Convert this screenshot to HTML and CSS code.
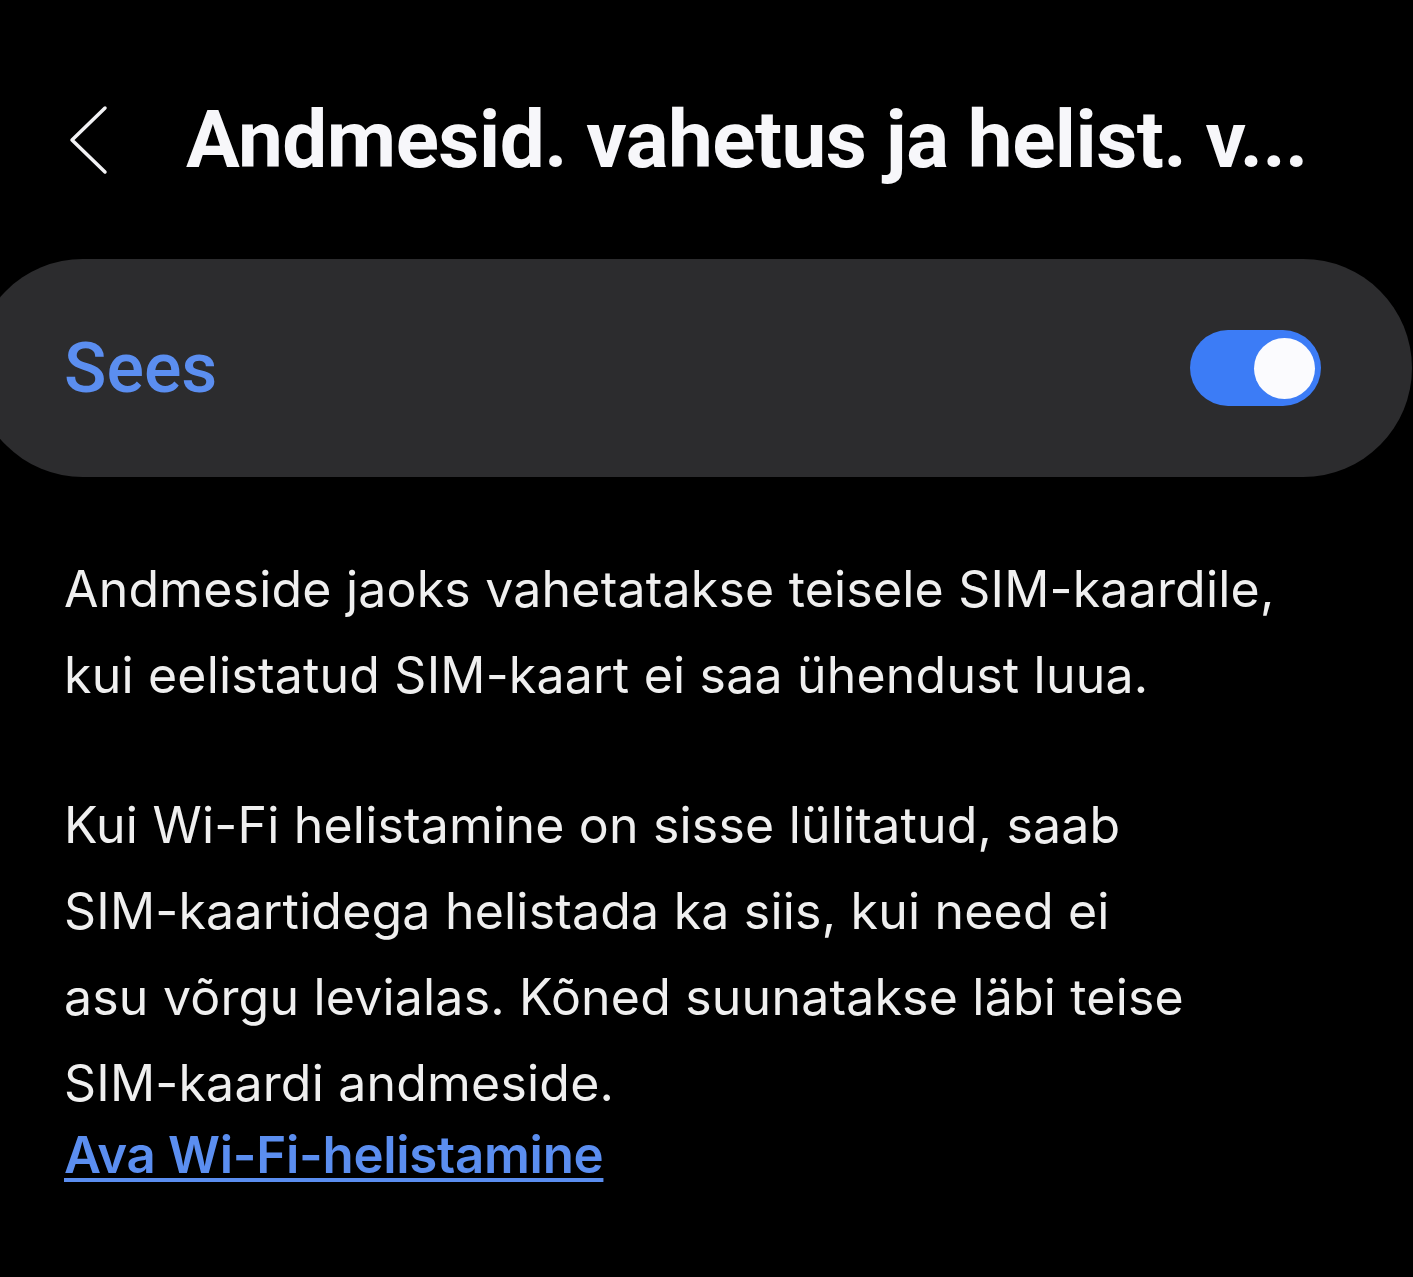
FILE: index.html
```html
<!DOCTYPE html>
<html>
<head>
  <meta charset="UTF-8">
  <title>Andmesid. vahetus ja helist. vahetus</title>
  <link rel="stylesheet" href="styles.css">
</head>
<body>
  <div class="screen">
    <div class="header">
      <button class="back" aria-label="Tagasi">
        <svg width="40" height="70" viewBox="0 0 40 70">
          <path d="M37 3 L4 35 L37 67" fill="none" stroke="#f2f2f4" stroke-width="3.5" stroke-linecap="round" stroke-linejoin="round"/>
        </svg>
      </button>
      <h1 class="title">Andmesid. vahetus ja helist. v...</h1>
    </div>

    <div class="card">
      <span class="card-label">Sees</span>
      <div class="switch on">
        <div class="knob"></div>
      </div>
    </div>

    <div class="info">
      <p>Andmeside jaoks vahetatakse teisele SIM-kaardile,<br>kui eelistatud SIM-kaart ei saa ühendust luua.</p>
      <p>Kui Wi-Fi helistamine on sisse lülitatud, saab<br>SIM-kaartidega helistada ka siis, kui need ei<br>asu võrgu levialas. Kõned suunatakse läbi teise<br>SIM-kaardi andmeside.</p>
      <a class="link" href="#">Ava Wi-Fi-helistamine</a>
    </div>
  </div>
</body>
</html>
```

FILE: styles.css
```css
body {
  margin: 0;
  background-color: #000000;
  font-family: Roboto, "Noto Sans", sans-serif;
  color: #f2f2f4;
  overflow: hidden;
}
.screen {
  width: 1413px;
  min-height: 1277px;
}
.header {
  display: flex;
  align-items: center;
  height: 140px;
  padding-top: 70px;
  padding-left: 68px;
}
.back {
  background: none;
  border: none;
  padding: 0;
  margin: 0;
  width: 42px;
  height: 70px;
  display: flex;
  align-items: center;
  cursor: pointer;
}
.title {
  margin: 0 0 0 76px;
  font-size: 80px;
  font-weight: 700;
  color: #f7f7fa;
  white-space: nowrap;
  letter-spacing: -0.5px;
}
.card {
  display: flex;
  align-items: center;
  justify-content: space-between;
  height: 218px;
  margin: 49px 1px 0 -26px;
  padding: 0 91px 0 90px;
  background-color: #2c2c2e;
  border-radius: 109px;
}
.card-label {
  font-size: 70px;
  font-weight: 500;
  color: #5b8ef0;
}
.switch {
  position: relative;
  width: 131px;
  height: 76px;
  border-radius: 38px;
  background-color: #3c7cf6;
}
.knob {
  position: absolute;
  top: 8px;
  right: 6px;
  width: 61px;
  height: 61px;
  border-radius: 50%;
  background-color: #fbfbfe;
}
.info {
  padding: 69px 0 0 64px;
  font-family: Inter, Roboto, sans-serif;
}
.info p {
  margin: 0 0 64px 0;
  font-size: 50px;
  line-height: 86px;
  letter-spacing: 0.2px;
  color: #efefef;
}
.info p:last-of-type {
  margin-bottom: 0;
}
.link {
  display: inline-block;
  font-size: 51px;
  font-weight: 600;
  line-height: 57px;
  letter-spacing: -0.3px;
  color: #5b8ef0;
  text-decoration: underline;
  text-decoration-thickness: 4px;
  text-underline-offset: 5px;
}
```
